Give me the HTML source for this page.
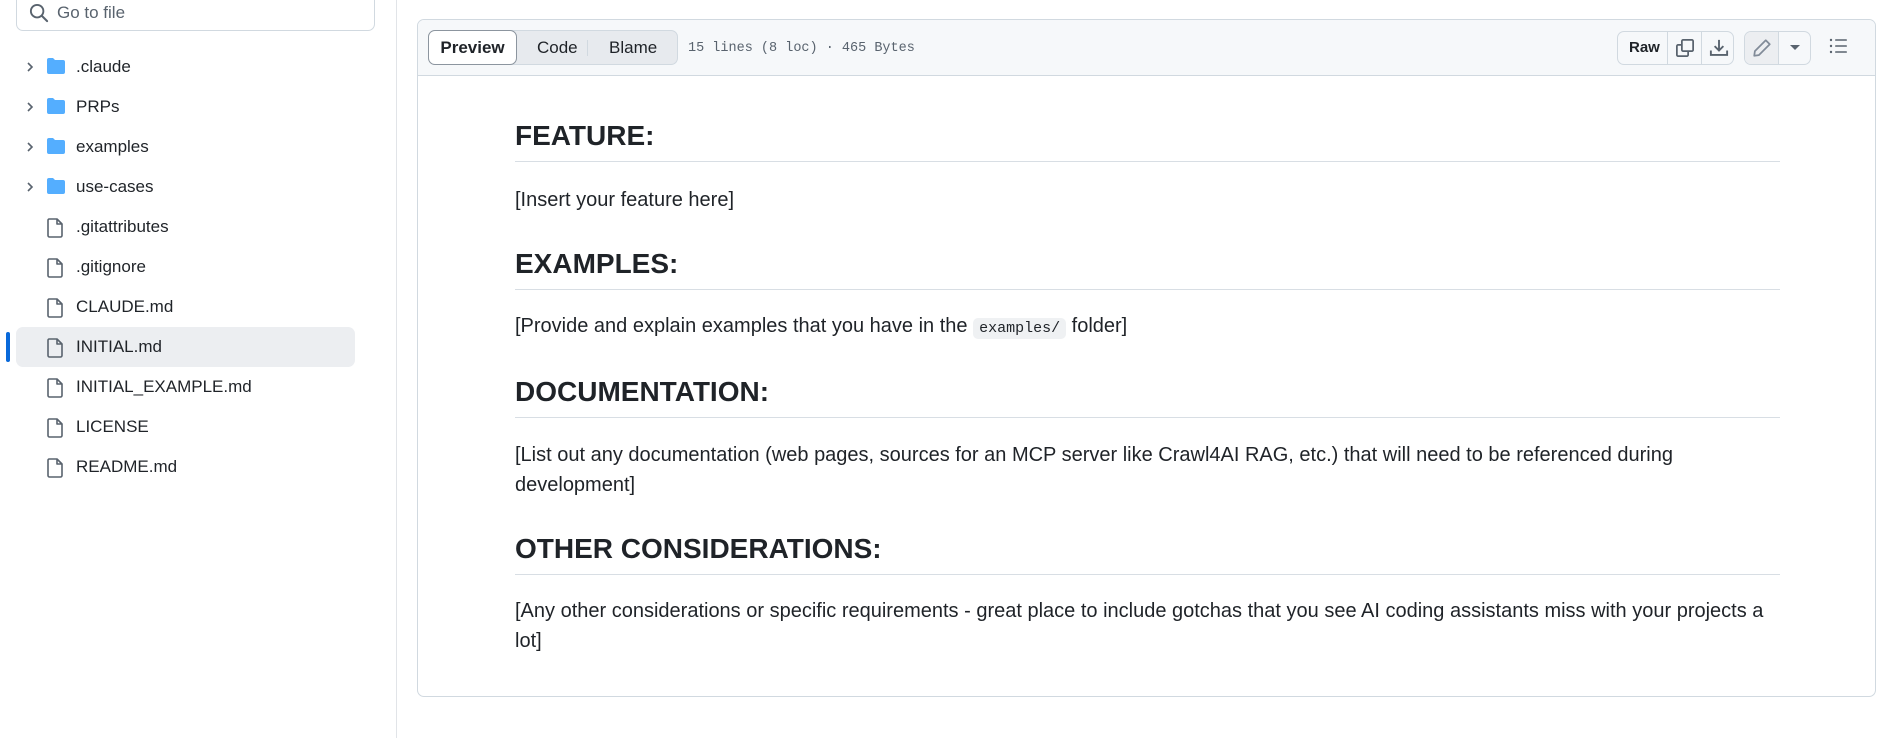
<!DOCTYPE html>
<html><head><meta charset="utf-8"><style>
*{box-sizing:border-box;margin:0;padding:0}
body{width:1887px;height:738px;background:#fff;font-family:"Liberation Sans",sans-serif;color:#1f2328;position:relative;overflow:hidden}
.abs{position:absolute}
.search{left:16px;top:-8px;width:359px;height:39px;border:1px solid #d1d9e0;border-radius:7px}
.row{position:absolute;left:16px;width:339px;height:40px;font-size:17px;line-height:40px}
.row span.t{position:absolute;left:60px}
.sel{background:#eceef1;border-radius:7px}
.chev{position:absolute;left:8px;top:14px}
.ic{position:absolute;left:30px;top:11px}
.vline{left:396px;top:0;width:1px;height:738px;background:#e1e4e8}
.box{left:417px;top:19px;width:1459px;height:678px;border:1px solid #d1d9e0;border-radius:7px;overflow:hidden}
.hdr{position:absolute;left:0;top:0;width:100%;height:56px;background:#f6f8fa;border-bottom:1px solid #d1d9e0}
.seg{position:absolute;left:10px;top:10px;width:250px;height:35px;background:#e7eaee;border:1px solid #d1d9e0;border-radius:7px}
.pv{position:absolute;left:-1px;top:-1px;width:89px;height:35px;background:#fff;border:1px solid #8c959f;border-radius:7px;font-size:17px;font-weight:bold;line-height:33px;text-align:center}
.sg{position:absolute;top:0;font-size:17px;line-height:33px}
.meta{position:absolute;left:270px;top:21px;font-family:"Liberation Mono",monospace;font-size:13.5px;color:#59636e}
.btng{position:absolute;top:11px;height:34px;border:1px solid #d1d9e0;border-radius:7px;background:#f6f8fa}
.md{position:absolute;left:97px;width:1265px}
h2{position:absolute;left:0;width:100%;font-size:28px;font-weight:bold;height:46px;border-bottom:1px solid #d8dee4;line-height:40px}
p{position:absolute;left:0;font-size:20px;line-height:30px;width:100%}
code{font-family:"Liberation Mono",monospace;font-size:15px;background:#eff1f3;border-radius:5px;padding:2px 6px}
</style></head><body>
<div class="abs search"><svg class="abs" style="left:12px;top:10px" width="20" height="20" viewBox="0 0 16 16"><circle cx="6.5" cy="6.5" r="5" fill="none" stroke="#59636e" stroke-width="1.5"/><path d="M10.3 10.3L14.5 14.5" stroke="#59636e" stroke-width="1.6" stroke-linecap="round"/></svg><span class="abs" style="left:40px;top:10px;font-size:17px;color:#59636e">Go to file</span></div>

<div class="row" style="top:47px"><svg class="chev" width="12" height="12" viewBox="0 0 12 12"><path d="M4 2l4 4-4 4" fill="none" stroke="#59636e" stroke-width="1.6"/></svg><svg class="ic" style="left:30px;top:10px" width="20" height="18" viewBox="0 0 20 18"><path d="M1 3a2 2 0 0 1 2-2h4l2 2h8a2 2 0 0 1 2 2v10a2 2 0 0 1-2 2H3a2 2 0 0 1-2-2z" fill="#54aeff"/></svg><span class="t">.claude</span></div>
<div class="row" style="top:87px"><svg class="chev" width="12" height="12" viewBox="0 0 12 12"><path d="M4 2l4 4-4 4" fill="none" stroke="#59636e" stroke-width="1.6"/></svg><svg class="ic" style="left:30px;top:10px" width="20" height="18" viewBox="0 0 20 18"><path d="M1 3a2 2 0 0 1 2-2h4l2 2h8a2 2 0 0 1 2 2v10a2 2 0 0 1-2 2H3a2 2 0 0 1-2-2z" fill="#54aeff"/></svg><span class="t">PRPs</span></div>
<div class="row" style="top:127px"><svg class="chev" width="12" height="12" viewBox="0 0 12 12"><path d="M4 2l4 4-4 4" fill="none" stroke="#59636e" stroke-width="1.6"/></svg><svg class="ic" style="left:30px;top:10px" width="20" height="18" viewBox="0 0 20 18"><path d="M1 3a2 2 0 0 1 2-2h4l2 2h8a2 2 0 0 1 2 2v10a2 2 0 0 1-2 2H3a2 2 0 0 1-2-2z" fill="#54aeff"/></svg><span class="t">examples</span></div>
<div class="row" style="top:167px"><svg class="chev" width="12" height="12" viewBox="0 0 12 12"><path d="M4 2l4 4-4 4" fill="none" stroke="#59636e" stroke-width="1.6"/></svg><svg class="ic" style="left:30px;top:10px" width="20" height="18" viewBox="0 0 20 18"><path d="M1 3a2 2 0 0 1 2-2h4l2 2h8a2 2 0 0 1 2 2v10a2 2 0 0 1-2 2H3a2 2 0 0 1-2-2z" fill="#54aeff"/></svg><span class="t">use-cases</span></div>

<div class="row" style="top:207px"><svg class="ic" width="18" height="20" viewBox="0 0 18 20"><path d="M3 1h8l5 5v11.5a1.5 1.5 0 0 1-1.5 1.5h-11A1.5 1.5 0 0 1 2 17.5v-15A1.5 1.5 0 0 1 3 1zM11 1v5h5" fill="none" stroke="#59636e" stroke-width="1.6" stroke-linejoin="round"/></svg><span class="t">.gitattributes</span></div>
<div class="row" style="top:247px"><svg class="ic" width="18" height="20" viewBox="0 0 18 20"><path d="M3 1h8l5 5v11.5a1.5 1.5 0 0 1-1.5 1.5h-11A1.5 1.5 0 0 1 2 17.5v-15A1.5 1.5 0 0 1 3 1zM11 1v5h5" fill="none" stroke="#59636e" stroke-width="1.6" stroke-linejoin="round"/></svg><span class="t">.gitignore</span></div>
<div class="row" style="top:287px"><svg class="ic" width="18" height="20" viewBox="0 0 18 20"><path d="M3 1h8l5 5v11.5a1.5 1.5 0 0 1-1.5 1.5h-11A1.5 1.5 0 0 1 2 17.5v-15A1.5 1.5 0 0 1 3 1zM11 1v5h5" fill="none" stroke="#59636e" stroke-width="1.6" stroke-linejoin="round"/></svg><span class="t">CLAUDE.md</span></div>
<div class="abs" style="left:6px;top:332px;width:4px;height:30px;background:#0969da;border-radius:2px"></div>
<div class="row sel" style="top:327px"><svg class="ic" width="18" height="20" viewBox="0 0 18 20"><path d="M3 1h8l5 5v11.5a1.5 1.5 0 0 1-1.5 1.5h-11A1.5 1.5 0 0 1 2 17.5v-15A1.5 1.5 0 0 1 3 1zM11 1v5h5" fill="none" stroke="#59636e" stroke-width="1.6" stroke-linejoin="round"/></svg><span class="t">INITIAL.md</span></div>
<div class="row" style="top:367px"><svg class="ic" width="18" height="20" viewBox="0 0 18 20"><path d="M3 1h8l5 5v11.5a1.5 1.5 0 0 1-1.5 1.5h-11A1.5 1.5 0 0 1 2 17.5v-15A1.5 1.5 0 0 1 3 1zM11 1v5h5" fill="none" stroke="#59636e" stroke-width="1.6" stroke-linejoin="round"/></svg><span class="t">INITIAL_EXAMPLE.md</span></div>
<div class="row" style="top:407px"><svg class="ic" width="18" height="20" viewBox="0 0 18 20"><path d="M3 1h8l5 5v11.5a1.5 1.5 0 0 1-1.5 1.5h-11A1.5 1.5 0 0 1 2 17.5v-15A1.5 1.5 0 0 1 3 1zM11 1v5h5" fill="none" stroke="#59636e" stroke-width="1.6" stroke-linejoin="round"/></svg><span class="t">LICENSE</span></div>
<div class="row" style="top:447px"><svg class="ic" width="18" height="20" viewBox="0 0 18 20"><path d="M3 1h8l5 5v11.5a1.5 1.5 0 0 1-1.5 1.5h-11A1.5 1.5 0 0 1 2 17.5v-15A1.5 1.5 0 0 1 3 1zM11 1v5h5" fill="none" stroke="#59636e" stroke-width="1.6" stroke-linejoin="round"/></svg><span class="t">README.md</span></div>

<div class="abs vline"></div>

<div class="abs box">
 <div class="hdr">
  <div class="seg"><div class="pv">Preview</div><span class="sg" style="left:108px">Code</span><div class="abs" style="left:158px;top:9px;width:1px;height:16px;background:#d1d9e0"></div><span class="sg" style="left:180px">Blame</span></div>
  <div class="meta">15 lines (8 loc) · 465 Bytes</div>
  <div class="btng" style="left:1199px;width:117px">
   <span class="abs" style="left:11px;top:7px;font-size:15px;font-weight:bold">Raw</span>
   <div class="abs" style="left:49px;top:0;width:1px;height:32px;background:#d1d9e0"></div>
   <svg class="abs" style="left:57px;top:6px" width="20" height="20" viewBox="0 0 16 16"><path d="M5.5 5.5h-3a1 1 0 0 0-1 1v7a1 1 0 0 0 1 1h7a1 1 0 0 0 1-1v-3M6.5 1.5h7a1 1 0 0 1 1 1v7a1 1 0 0 1-1 1h-7a1 1 0 0 1-1-1v-7a1 1 0 0 1 1-1z" fill="none" stroke="#59636e" stroke-width="1.4"/></svg>
   <div class="abs" style="left:83px;top:0;width:1px;height:32px;background:#d1d9e0"></div>
   <svg class="abs" style="left:91px;top:6px" width="20" height="20" viewBox="0 0 16 16"><path d="M8 1.5v8M4.5 6.5L8 10l3.5-3.5M1.5 10v3.5h13V10" fill="none" stroke="#59636e" stroke-width="1.5"/></svg>
  </div>
  <div class="btng" style="left:1326px;width:67px">
   <div class="abs" style="left:0;top:0;width:33px;height:32px;background:#eceef1;border-radius:6px 0 0 6px"></div>
   <svg class="abs" style="left:7px;top:6px" width="20" height="20" viewBox="0 0 16 16"><path d="M11 1.8l3.2 3.2L5.5 13.7 1.8 14.2l.5-3.7z" fill="none" stroke="#818b98" stroke-width="1.4" stroke-linejoin="round"/></svg>
   <div class="abs" style="left:33px;top:0;width:1px;height:32px;background:#d1d9e0"></div>
   <svg class="abs" style="left:45px;top:13px" width="10" height="6" viewBox="0 0 10 6"><path d="M0 0h10L5 5z" fill="#59636e"/></svg>
  </div>
  <svg class="abs" style="left:1410px;top:16px" width="20" height="20" viewBox="0 0 20 20"><g fill="#59636e"><circle cx="3" cy="4" r="1.2"/><circle cx="3" cy="10" r="1.2"/><circle cx="3" cy="16" r="1.2"/><rect x="7" y="3.2" width="12" height="1.6" rx=".8"/><rect x="7" y="9.2" width="12" height="1.6" rx=".8"/><rect x="7" y="15.2" width="12" height="1.6" rx=".8"/></g></svg>
 </div>
 <div class="md">
  <h2 style="top:96px">FEATURE:</h2>
  <p style="top:165px">[Insert your feature here]</p>
  <h2 style="top:224px">EXAMPLES:</h2>
  <p style="top:291px">[Provide and explain examples that you have in the <code>examples/</code> folder]</p>
  <h2 style="top:352px">DOCUMENTATION:</h2>
  <p style="top:420px">[List out any documentation (web pages, sources for an MCP server like Crawl4AI RAG, etc.) that will need to be referenced during development]</p>
  <h2 style="top:509px">OTHER CONSIDERATIONS:</h2>
  <p style="top:576px">[Any other considerations or specific requirements - great place to include gotchas that you see AI coding assistants miss with your projects a lot]</p>
 </div>
</div>
</body></html>
